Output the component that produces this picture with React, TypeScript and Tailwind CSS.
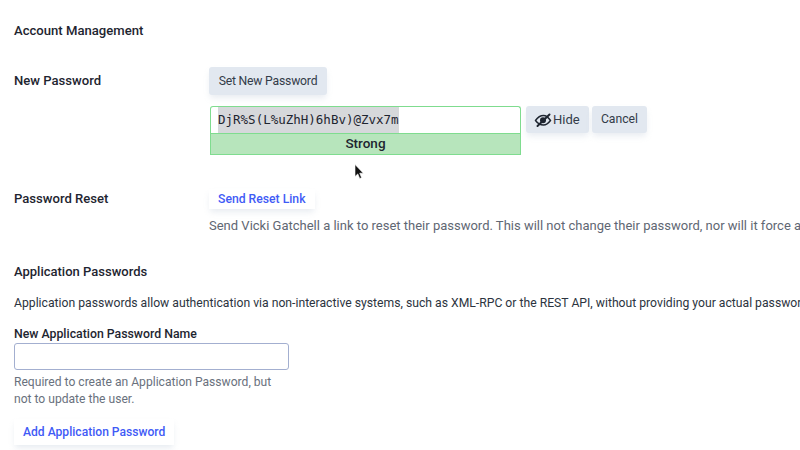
const buttonShadow = "shadow-[0_4px_6px_-1px_rgba(203,213,225,0.45)]";
const ui = "font-['Roboto','Liberation_Sans',sans-serif]";

export default function App() {
  return (
    <div className={`relative w-[800px] h-[450px] overflow-hidden bg-white px-[14px] text-[#1e2530] ${ui}`}>
      <h2 className="pt-[22px] text-[13.1px] leading-[17px] font-medium">Account Management</h2>

      <div className="mt-[24px] grid grid-cols-[195px_1fr]">
        <div className="pt-[9px] text-[13.1px] leading-[17px] font-medium">New Password</div>
        <div>
          <button className={`mt-[4px] h-[28px] w-[118px] rounded-[3px] bg-[#e2e8f0] text-[12.2px] tracking-[-0.2px] text-[#333c49] ${buttonShadow}`}>
            Set New Password
          </button>
          <div className="mt-[11px] ml-[1px] flex items-start gap-[5px]">
            <div className="w-[311px]">
              <div className="h-[27px] flex items-center pl-[7px] rounded-t-[3px] border border-b-0 border-[#7fdc8f] bg-white font-['DejaVu_Sans_Mono',monospace] text-[12.5px] text-[#1e2530]">
                <span className="bg-[#d6d8db] leading-[25px] pb-[1px]">DjR%S(L%uZhH)6hBv)@Zvx7m</span>
              </div>
              <div className="h-[22px] pb-[1px] flex items-center justify-center border border-[#7fdc8f] bg-[#b7e5bc] text-[13.5px] font-medium">
                Strong
              </div>
            </div>
            <button className={`h-[27px] w-[63px] pl-[8px] flex items-center gap-[1px] rounded-[3px] bg-[#e2e8f0] text-[13px] text-[#333c49] ${buttonShadow}`}>
              <svg width="18" height="18" viewBox="0 0 18 18" className="text-[#1e2530]" fill="none" stroke="currentColor">
                <path d="M1.5 9.5C4 5.8 7 4.5 9.5 4.5s4.5 1.3 7 5c-2.5 3.4-4.5 4.5-7 4.5S4 13 1.5 9.5z" strokeWidth="1.4" />
                <circle cx="9" cy="9.3" r="3" fill="currentColor" stroke="none" />
                <path d="M3.5 15L15.5 3.5" strokeWidth="2" strokeLinecap="round" />
              </svg>
              Hide
            </button>
            <button className={`-ml-[2px] h-[27px] w-[55px] rounded-[3px] bg-[#e2e8f0] text-[12.2px] text-[#333c49] ${buttonShadow}`}>
              Cancel
            </button>
          </div>
        </div>
      </div>

      <div className="mt-[31px] grid grid-cols-[195px_1fr]">
        <div className="pt-[4px] text-[13.1px] leading-[17px] font-medium">Password Reset</div>
        <div>
          <button className={`px-[9px] h-[20px] text-[12.2px] font-medium text-[#3f5bf6] ${buttonShadow}`}>
            Send Reset Link
          </button>
          <p className="mt-[7px] whitespace-nowrap text-[13px] leading-[17px] text-[#5f6773]">
            Send Vicki Gatchell a link to reset their password. This will not change their password, nor will it force a change.
          </p>
        </div>
      </div>

      <h3 className="mt-[29px] text-[13px] leading-[17px] font-medium">Application Passwords</h3>
      <p className="mt-[15px] whitespace-nowrap text-[12.2px] leading-[17px] text-[#2c3440]">
        Application passwords allow authentication via non-interactive systems, such as XML-RPC or the REST API, without providing your actual password.
      </p>
      <label className="block mt-[14px] text-[12.3px] leading-[17px] font-medium">New Application Password Name</label>
      <input className="block w-[275px] h-[27px] rounded-[3px] border border-[#a3afd0] bg-white" />
      <p className="mt-[4px] w-[275px] text-[12.1px] leading-[17px] text-[#69717d]">
        Required to create an Application Password, but not to update the user.
      </p>
      <button className={`mt-[11px] px-[9px] h-[26px] text-[12.1px] font-medium text-[#3f5bf6] ${buttonShadow}`}>
        Add Application Password
      </button>

      {/* mouse pointer */}
      <svg className="absolute left-[354px] top-[164px]" width="10" height="16" viewBox="0 0 10 16">
        <path d="M1 0.5v12l2.8-2.6 1.9 4.6 1.9-.8-1.9-4.5h3.6z" fill="#111" stroke="#fff" strokeWidth="0.6" />
      </svg>
    </div>
  );
}
